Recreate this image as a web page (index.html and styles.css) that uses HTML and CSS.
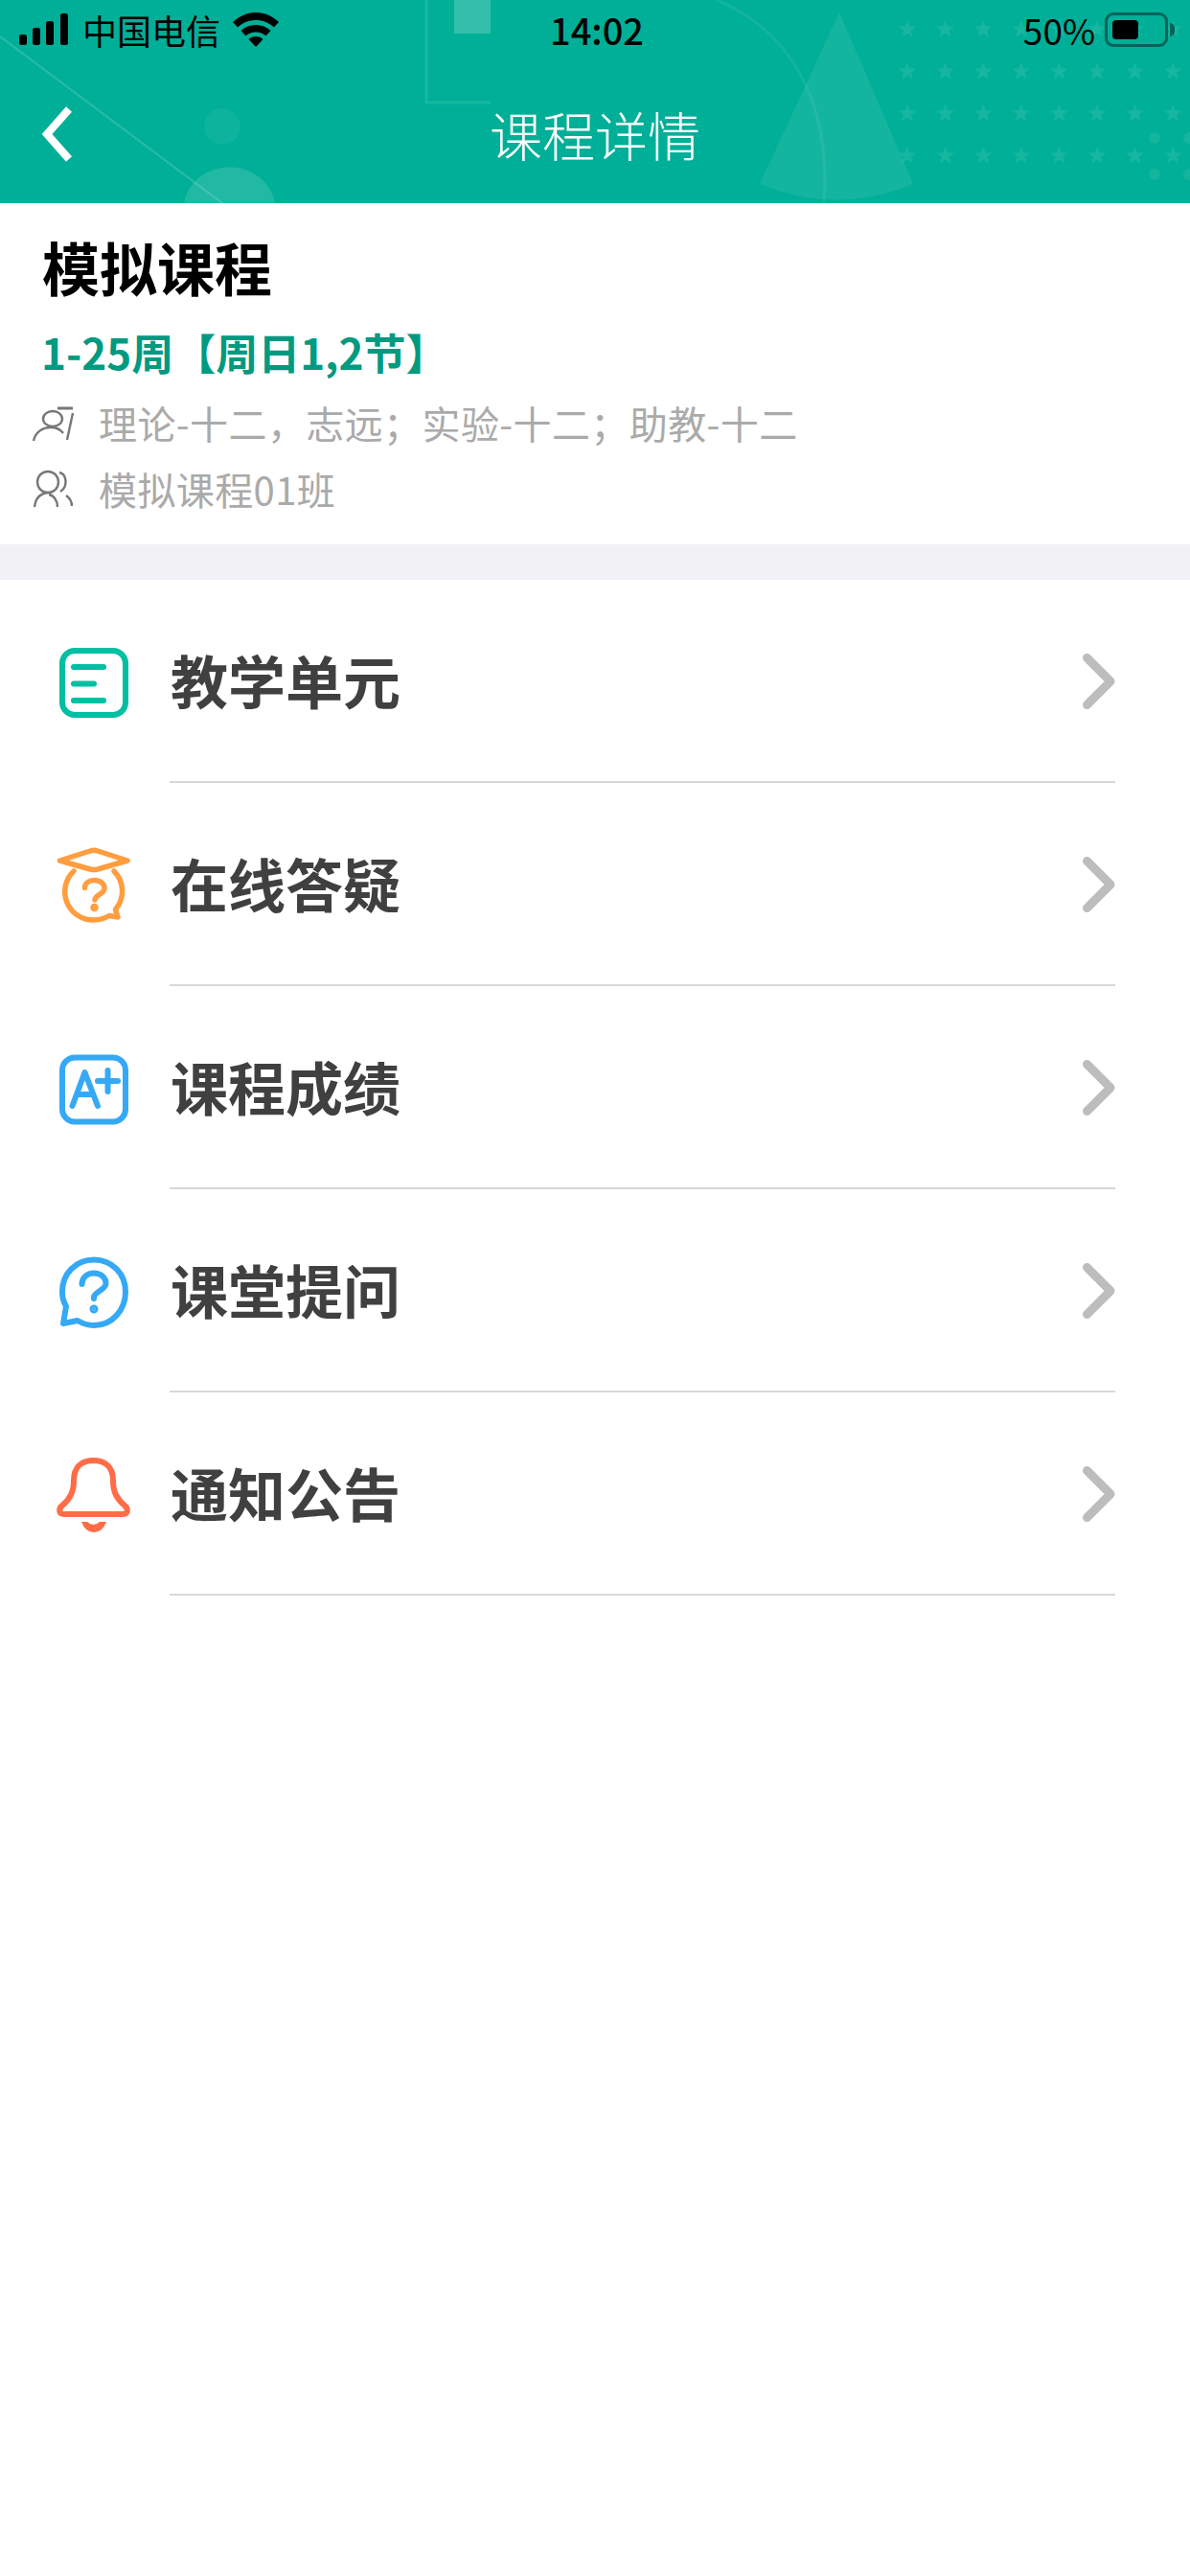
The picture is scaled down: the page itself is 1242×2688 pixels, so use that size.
FILE: index.html
```html
<!DOCTYPE html>
<html lang="zh-CN">
<head>
    <meta charset="UTF-8">
    <meta name="viewport" content="width=device-width, initial-scale=1.0">
    <title>课程详情</title>
    <link rel="stylesheet" href="styles.css">
</head>
<body>
<header class="header">
    <svg class="header-bg" width="1242" height="212" viewBox="0 0 1242 212">
        <defs>
            <pattern id="stars" x="927" y="7" width="39.6" height="44" patternUnits="userSpaceOnUse">
                <path d="M20 14l2.500 6.500h7l-5.700 4.300 2.100 7-5.900-4.200-5.900 4.200 2.100-7-5.700-4.300h7z" fill="#fff" fill-opacity=".09"/>
            </pattern>
        </defs>
        <path d="M0 38L232 212" stroke="#fff" stroke-opacity=".16" stroke-width="2" fill="none"/>
        <ellipse cx="232" cy="132" rx="19" ry="19" fill="#fff" fill-opacity=".05"/>
        <path d="M192 212a48 44 0 0 1 95 0z" fill="#fff" fill-opacity=".13"/>
        <rect x="474" y="0" width="38" height="35" fill="#fff" fill-opacity=".2"/>
        <path d="M445 0V107H512" stroke="#fff" stroke-opacity=".1" stroke-width="3" fill="none"/>
        <path d="M748 0C820 30 868 100 860 212" stroke="#fff" stroke-opacity=".07" stroke-width="3" fill="none"/>
        <path d="M876 13L793 192Q873 225 953 192z" fill="#fff" fill-opacity=".08"/>
        <rect x="927" y="7" width="315" height="176" fill="url(#stars)"/>
        <g fill="#fff" fill-opacity=".08">
            <circle cx="1205" cy="144" r="6"/>
            <circle cx="1241" cy="144" r="6"/>
            <circle cx="1205" cy="182" r="6"/>
            <circle cx="1241" cy="182" r="6"/>
        </g>
    </svg>
    <div class="status">
        <div class="status-left">
            <svg width="52" height="34" viewBox="0 0 52 34">
                <rect x="0" y="22" width="8" height="11" rx="2.500"/>
                <rect x="14" y="15" width="8" height="18" rx="2.500"/>
                <rect x="28" y="8" width="8" height="25" rx="2.500"/>
                <rect x="43" y="0" width="8" height="33" rx="2.500"/>
            </svg>
            <span class="carrier">中国电信</span>
            <svg class="wifi" width="48" height="36" viewBox="0 0 48 36">
                <path d="M24 0C15 0 7 3.500 0 10l5 5.500C10.500 10.500 17 8 24 8s13.500 2.500 19 7.500l5-5.500C41 3.500 33 0 24 0z"/>
                <path d="M24 13c-6 0-11.500 2.300-15.500 6l5 5.500c2.800-2.500 6.500-4 10.500-4s7.700 1.500 10.500 4l5-5.500c-4-3.700-9.500-6-15.500-6z"/>
                <path d="M24 25c-3 0-5.500 1-7.500 3L24 36l7.500-8c-2-2-4.500-3-7.500-3z"/>
            </svg>
        </div>
        <span class="time">14:02</span>
        <div class="status-right">
            <span class="percent">50%</span>
            <div class="battery"><div class="battery-level"></div></div>
            <div class="battery-cap"></div>
        </div>
    </div>
    <div class="nav">
        <svg class="back" width="34" height="58" viewBox="0 0 34 58">
            <path d="M30 3L7 29L30 55" fill="none" stroke="#fff" stroke-width="8"/>
        </svg>
        <h1 class="nav-title">课程详情</h1>
    </div>
</header>

<section class="info">
    <h2 class="course-name">模拟课程</h2>
    <p class="course-time">1-25周【周日1,2节】</p>
    <div class="meta meta-teacher">
        <svg width="44" height="40" viewBox="0 0 44 40" fill="none" stroke="#777" stroke-width="2.400">
            <ellipse cx="22" cy="16" rx="10" ry="8"/>
            <path d="M2 39C4 30 11 25 20 25C25 25 30 27 33 31"/>
            <path d="M27 5H43" stroke-width="3"/>
            <path d="M43 10L37 38"/>
        </svg>
        <span>理论-十二，志远；实验-十二；助教-十二</span>
    </div>
    <div class="meta meta-class">
        <svg width="44" height="40" viewBox="0 0 44 40" fill="none" stroke="#777" stroke-width="2.400">
            <circle cx="17" cy="13" r="11"/>
            <path d="M3 39C4 30 9 25 17 24"/>
            <path d="M18 26C23 27 27 32 27 39"/>
            <path d="M29 3C37 5 38 18 30 23"/>
            <path d="M36 27C40 30 42 34 42 38"/>
        </svg>
        <span>模拟课程01班</span>
    </div>
</section>

<div class="divider"></div>

<ul class="menu">
    <li class="menu-row">
        <svg class="menu-icon" viewBox="0 0 80 80" fill="none" stroke="#00bfa2" stroke-linecap="round">
            <rect x="7" y="8" width="66" height="67" rx="13" stroke-width="6"/>
            <path d="M19 25H50M19 42.500H40M19 60H50" stroke-width="6"/>
        </svg>
        <div class="menu-body">
            <span class="menu-label">教学单元</span>
            <svg class="chevron" viewBox="0 0 34 58"><path d="M4.500 4.500L29 29L4.500 53.500"/></svg>
        </div>
    </li>
    <li class="menu-row">
        <svg class="menu-icon" viewBox="0 0 80 80" fill="none" stroke="#ff9d3f" stroke-width="5.500" stroke-linecap="round" stroke-linejoin="round">
            <path d="M4.500 15L36 5Q40 3.500 44 5L75 15L44 24Q40 25 36 24z"/>
            <path d="M19 26A29.500 29.500 0 0 0 40 77C46 77 51 75.500 56 72.500L65 74L62.500 66A29.500 29.500 0 0 0 61 26"/>
            <path d="M30.500 43.500C30.500 38.500 35 35.500 40.500 35.500C46.500 35.500 51 39 51 44C51 50 42 50 41 56"/>
            <circle cx="40.500" cy="64" r="1.500" fill="#ff9d3f"/>
        </svg>
        <div class="menu-body">
            <span class="menu-label">在线答疑</span>
            <svg class="chevron" viewBox="0 0 34 58"><path d="M4.500 4.500L29 29L4.500 53.500"/></svg>
        </div>
    </li>
    <li class="menu-row">
        <svg class="menu-icon" viewBox="0 0 80 80" fill="none" stroke="#35a9f5" stroke-width="6" stroke-linecap="round" stroke-linejoin="round">
            <rect x="7" y="8.500" width="66" height="67" rx="13"/>
            <path d="M17.500 59L30.500 24L44 59M22.500 47H39"/>
            <path d="M44 33H65M54.500 22V44"/>
        </svg>
        <div class="menu-body">
            <span class="menu-label">课程成绩</span>
            <svg class="chevron" viewBox="0 0 34 58"><path d="M4.500 4.500L29 29L4.500 53.500"/></svg>
        </div>
    </li>
    <li class="menu-row">
        <svg class="menu-icon" viewBox="0 0 80 80" fill="none" stroke="#35a9f5" stroke-width="6" stroke-linecap="round" stroke-linejoin="round">
            <path d="M40 7.500C21 7.500 7 22 7 41C7 47 8.500 52 11 56L8 74L23 71C28 74 34 76 40 76C59 76 73 60 73 41C73 22 59 7.500 40 7.500z"/>
            <path d="M27.500 33C27.500 26 33 21.500 40 21.500C47 21.500 52.500 26 52.500 32C52.500 39 42 40 40 46V48"/>
            <circle cx="40" cy="59" r="1.500" fill="#35a9f5"/>
        </svg>
        <div class="menu-body">
            <span class="menu-label">课堂提问</span>
            <svg class="chevron" viewBox="0 0 34 58"><path d="M4.500 4.500L29 29L4.500 53.500"/></svg>
        </div>
    </li>
    <li class="menu-row">
        <svg class="menu-icon" viewBox="0 0 80 80" fill="none" stroke="#ff6c47" stroke-width="6" stroke-linejoin="round">
            <path d="M9 61C3 61 3 55 7 52C15 45 19 38 19 26C19 12 27 5 39.500 5C52 5 60 12 60 26C60 38 64 45 72 52C76 55 76 61 70 61z"/>
            <path d="M27 69H33Q39.500 75 46 69H53Q49 80 40 80Q31 80 27 69z" fill="#ff6c47" stroke="none"/>
        </svg>
        <div class="menu-body">
            <span class="menu-label">通知公告</span>
            <svg class="chevron" viewBox="0 0 34 58"><path d="M4.500 4.500L29 29L4.500 53.500"/></svg>
        </div>
    </li>
</ul>
</body>
</html>
```

FILE: styles.css
```css
* {
    box-sizing: border-box;
}

body {
    margin: 0;
    background-color: #fff;
    font-family: "Noto Sans CJK SC", "Noto Sans", sans-serif;
}

/* header */
.header {
    position: relative;
    height: 212px;
    background-color: #00af97;
    overflow: hidden;
}

.header-bg {
    position: absolute;
    left: 0;
    top: 0;
}

.status {
    position: relative;
    display: grid;
    grid-template-columns: 1fr auto 1fr;
    align-items: center;
    height: 62px;
    padding: 0 16px 0 20px;
    color: #000;
}

.status-left {
    display: flex;
    align-items: center;
}

.carrier {
    margin-left: 14px;
    font-size: 36px;
    line-height: 44px;
}

.wifi {
    margin-left: 13px;
}

.time {
    font-size: 38px;
    font-weight: 500;
    line-height: 44px;
}

.status-right {
    display: flex;
    align-items: center;
    justify-content: flex-end;
}

.percent {
    font-size: 37px;
    line-height: 44px;
}

.battery {
    width: 66px;
    height: 36px;
    margin-left: 10px;
    padding: 5px;
    border: 3px solid #00645a;
    border-radius: 9px;
}

.battery-level {
    width: 27px;
    height: 100%;
    background-color: #000;
    border-radius: 4px;
}

.battery-cap {
    width: 5px;
    height: 14px;
    margin-left: 2px;
    background-color: #00645a;
    border-radius: 0 5px 5px 0;
}

.nav {
    position: relative;
    display: flex;
    align-items: center;
    justify-content: center;
    height: 150px;
    padding-top: 4px;
}

.back {
    position: absolute;
    left: 42px;
    top: 49px;
}

.nav-title {
    margin: 0;
    color: #fff;
    font-size: 55px;
    font-weight: 300;
    line-height: 70px;
}

/* course info */
.info {
    height: 356px;
    padding: 36px 44px 0 44px;
}

.course-name {
    margin: 0;
    color: #000;
    font-size: 60px;
    font-weight: 700;
    line-height: 60px;
}

.course-time {
    margin: 37px 0 0 -1px;
    color: #009a80;
    font-size: 44px;
    font-weight: 600;
    line-height: 44px;
}

.meta {
    display: flex;
    align-items: center;
    height: 40px;
    margin-left: -11px;
    color: #aaa;
    font-size: 40px;
    letter-spacing: 0.4px;
    line-height: 40px;
}

.meta span {
    margin-left: 26px;
}

.meta-teacher {
    margin-top: 32px;
}

.meta-class {
    margin-top: 29px;
}

.divider {
    height: 37px;
    background-color: #f1f1f6;
}

/* menu */
.menu {
    margin: 0;
    padding: 0;
    list-style: none;
}

.menu-row {
    display: flex;
    align-items: center;
    height: 212px;
    padding-left: 58px;
}

.menu-icon {
    flex: none;
    width: 80px;
    height: 80px;
    overflow: visible;
}

.menu-body {
    display: flex;
    flex: 1;
    align-items: center;
    justify-content: space-between;
    align-self: stretch;
    margin: 0 78px 0 39px;
    padding-bottom: 2px;
    border-bottom: 2px solid #d8d8d8;
}

.menu-label {
    margin-left: 1px;
    color: #404040;
    font-size: 60px;
    font-weight: 600;
    line-height: 70px;
}

.chevron {
    width: 34px;
    height: 58px;
    margin-top: 4px;
    fill: none;
    stroke: #bdbdbd;
    stroke-width: 9;
    stroke-linecap: round;
    stroke-linejoin: round;
}
```
